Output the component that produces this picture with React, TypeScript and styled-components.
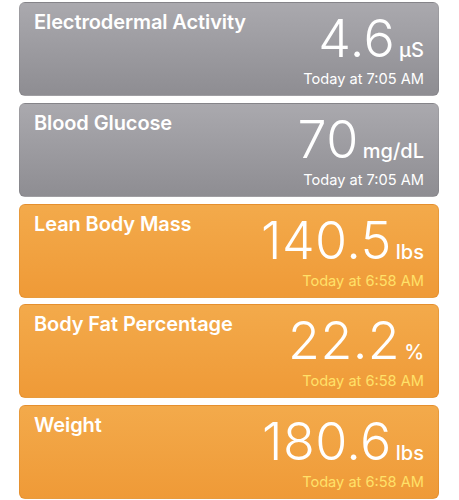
import React from 'react';
import styled, { createGlobalStyle, css } from 'styled-components';

const GlobalStyle = createGlobalStyle`
  html, body {
    margin: 0;
    padding: 0;
    background: #ffffff;
  }
  body {
    font-family: Inter, "Noto Sans", "Liberation Sans", sans-serif;
    -webkit-font-smoothing: antialiased;
  }
`;

type Tone = 'gray' | 'orange';

const List = styled.div`
  display: flex;
  flex-direction: column;
  gap: 6.75px;
  padding: 2px 20px 0 19px;
`;

const Card = styled.div<{ $tone: Tone }>`
  height: 94px;
  box-sizing: border-box;
  border-radius: 6px;
  display: flex;
  justify-content: space-between;
  padding: 7px 14px 7px 14px;
  color: #ffffff;
  ${({ $tone }) =>
    $tone === 'gray'
      ? css`
          background: linear-gradient(180deg, #aaa9ae 0%, #8e8d92 100%);
          border: 1px solid rgba(0, 0, 0, 0.06);
        `
      : css`
          background: linear-gradient(180deg, #f3aa4b 0%, #ef9a37 100%);
          border: 1px solid rgba(200, 110, 20, 0.25);
        `}
`;

const Title = styled.div`
  font-size: 20px;
  font-weight: 600;
  line-height: 24px;
  letter-spacing: -0.1px;
`;

const Reading = styled.div`
  display: flex;
  flex-direction: column;
  align-items: flex-end;
  justify-content: flex-end;
`;

const ValueRow = styled.div`
  display: flex;
  align-items: baseline;
  gap: 4px;
`;

const Value = styled.span`
  font-size: 52px;
  font-weight: 300;
  line-height: 1;
  letter-spacing: 0.4px;
`;

const Unit = styled.span`
  font-size: 20px;
  font-weight: 500;
`;

const Stamp = styled.div<{ $tone: Tone }>`
  margin-top: 5px;
  font-size: 14.6px;
  line-height: 18px;
  font-weight: 400;
  color: ${({ $tone }) => ($tone === 'gray' ? '#ffffff' : '#ffe169')};
`;

type Sample = {
  title: string;
  value: string;
  unit: string;
  time: string;
  tone: Tone;
};

const samples: Sample[] = [
  { title: 'Electrodermal Activity', value: '4.6', unit: 'µS', time: 'Today at 7:05 AM', tone: 'gray' },
  { title: 'Blood Glucose', value: '70', unit: 'mg/dL', time: 'Today at 7:05 AM', tone: 'gray' },
  { title: 'Lean Body Mass', value: '140.5', unit: 'lbs', time: 'Today at 6:58 AM', tone: 'orange' },
  { title: 'Body Fat Percentage', value: '22.2', unit: '%', time: 'Today at 6:58 AM', tone: 'orange' },
  { title: 'Weight', value: '180.6', unit: 'lbs', time: 'Today at 6:58 AM', tone: 'orange' },
];

const App: React.FC = () => {
  return (
    <>
      <GlobalStyle />
      <List>
        {samples.map((s) => (
          <Card key={s.title} $tone={s.tone}>
            <Title>{s.title}</Title>
            <Reading>
              <ValueRow>
                <Value>{s.value}</Value>
                <Unit>{s.unit}</Unit>
              </ValueRow>
              <Stamp $tone={s.tone}>{s.time}</Stamp>
            </Reading>
          </Card>
        ))}
      </List>
    </>
  );
};

export default App;
